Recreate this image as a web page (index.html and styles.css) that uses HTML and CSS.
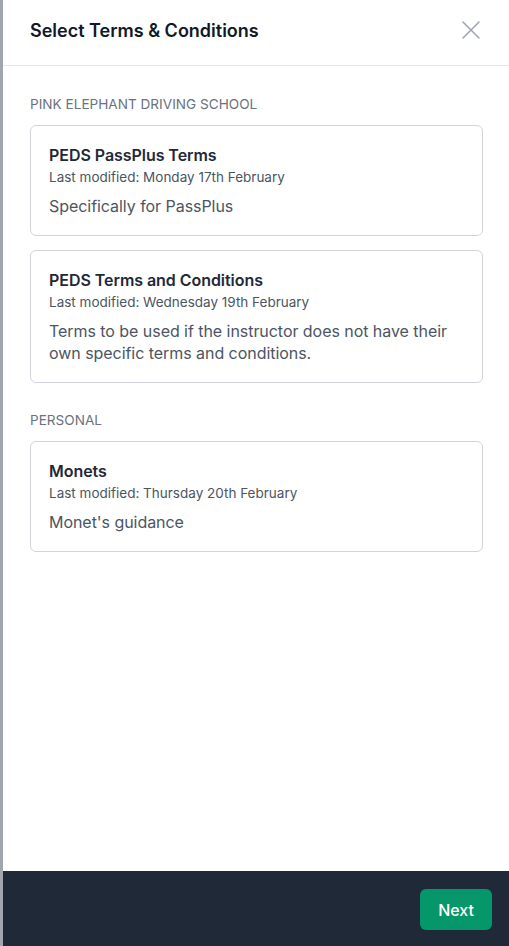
FILE: index.html
```html
<!DOCTYPE html>
<html lang="en">
<head>
<meta charset="utf-8">
<title>Select Terms &amp; Conditions</title>
<link rel="stylesheet" href="styles.css">
</head>
<body>
<div class="panel">
  <header class="panel-header">
    <h1 class="panel-title">Select Terms &amp; Conditions</h1>
    <button class="close-btn" aria-label="Close">
      <svg width="24" height="24" viewBox="0 0 24 24" fill="none" stroke="currentColor" stroke-width="1.5" stroke-linecap="round">
        <path d="M4 4L20 20M20 4L4 20"/>
      </svg>
    </button>
  </header>
  <main class="panel-body">
    <section class="group">
      <h2 class="group-label">PINK ELEPHANT DRIVING SCHOOL</h2>
      <div class="card-list">
        <div class="card">
          <div class="card-title">PEDS PassPlus Terms</div>
          <div class="card-meta">Last modified: Monday 17th February</div>
          <p class="card-desc">Specifically for PassPlus</p>
        </div>
        <div class="card">
          <div class="card-title">PEDS Terms and Conditions</div>
          <div class="card-meta">Last modified: Wednesday 19th February</div>
          <p class="card-desc">Terms to be used if the instructor does not have their own specific terms and conditions.</p>
        </div>
      </div>
    </section>
    <section class="group">
      <h2 class="group-label">PERSONAL</h2>
      <div class="card-list">
        <div class="card">
          <div class="card-title">Monets</div>
          <div class="card-meta">Last modified: Thursday 20th February</div>
          <p class="card-desc">Monet's guidance</p>
        </div>
      </div>
    </section>
  </main>
  <footer class="panel-footer">
    <button class="next-btn">Next</button>
  </footer>
</div>
</body>
</html>
```
FILE: styles.css
```css
* { box-sizing: border-box; }

html, body {
  margin: 0;
  padding: 0;
  height: 100%;
}

body {
  background: #a1a5ad;
  font-family: Inter, "Noto Sans", "Liberation Sans", sans-serif;
  color: #111827;
  padding-left: 3px;
}

.panel {
  background: #ffffff;
  height: 946px;
  display: flex;
  flex-direction: column;
}

.panel-header {
  height: 66px;
  border-bottom: 1px solid #e5e7eb;
  padding: 0 24px 4px 27px;
  display: flex;
  align-items: center;
  justify-content: space-between;
  flex-shrink: 0;
}

.panel-title {
  margin: 0;
  font-size: 18px;
  line-height: 28px;
  font-weight: 600;
  color: #111827;
}

.close-btn {
  background: none;
  border: 0;
  padding: 0;
  margin: 0 2px 2px 0;
  width: 24px;
  height: 24px;
  color: #9ca3af;
  display: flex;
}

.panel-body {
  flex: 1;
  padding: 28px 26px 0 27px;
  display: flex;
  flex-direction: column;
  gap: 27px;
}

.group-label {
  margin: 0 0 11px;
  font-size: 13.6px;
  line-height: 20px;
  font-weight: 400;
  color: #6b7280;
}

.card-list {
  display: flex;
  flex-direction: column;
  gap: 14px;
}

.card {
  border: 1px solid #d1d5db;
  border-radius: 6px;
  padding: 18px 18px;
}

.card-title {
  font-size: 16px;
  line-height: 23px;
  font-weight: 600;
  color: #1f2937;
  letter-spacing: -0.05px;
}

.card-meta {
  font-size: 13.5px;
  line-height: 20px;
  color: #4b5563;
}

.card-desc {
  margin: 8px 0 0;
  font-size: 16px;
  line-height: 22px;
  color: #4b5563;
  letter-spacing: -0.05px;
}

.panel-footer {
  height: 75px;
  background: #1f2937;
  display: flex;
  justify-content: flex-end;
  align-items: flex-start;
  padding: 18px 17px 0 0;
  flex-shrink: 0;
}

.next-btn {
  background: #059669;
  color: #ffffff;
  border: 0;
  border-radius: 6px;
  height: 41px;
  padding: 0 18px;
  font-family: Inter, "Noto Sans", "Liberation Sans", sans-serif;
  font-size: 16px;
  font-weight: 500;
}
```
